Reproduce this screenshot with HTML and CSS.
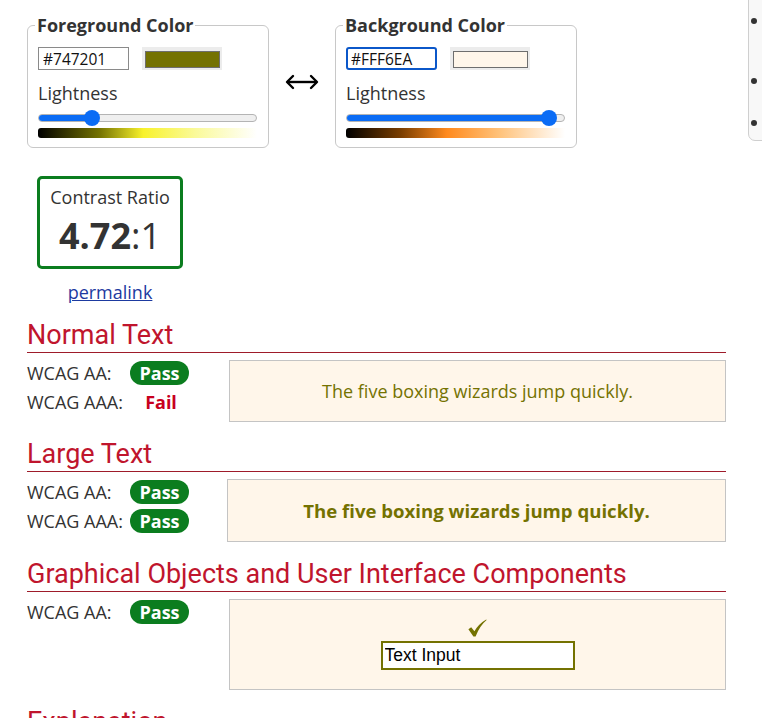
FILE: index.html
```html
<!DOCTYPE html>
<html lang="en">
<head>
<meta charset="utf-8">
<title>Contrast Checker</title>
<link rel="stylesheet" href="styles.css">
</head>
<body>
<div class="page">
  <main class="main">
    <div class="colors">
      <fieldset class="picker">
        <legend>Foreground Color</legend>
        <div class="picker-row">
          <input class="hex" type="text" value="#747201">
          <span class="swatch-btn"><span class="swatch swatch-fg"></span></span>
        </div>
        <div class="light-label">Lightness</div>
        <div class="slider">
          <div class="track"><div class="fill" style="width:24.5%"></div></div>
          <div class="thumb" style="left:24.5%"></div>
        </div>
        <div class="grad grad-fg"></div>
      </fieldset>
      <div class="swap">
        <svg width="36" height="16" viewBox="0 0 36 16" aria-hidden="true">
          <path d="M3 8H33" stroke="#000" stroke-width="2.4" fill="none"/>
          <path d="M9 2L3 8L9 14" stroke="#000" stroke-width="2.4" fill="none" stroke-linecap="round" stroke-linejoin="round"/>
          <path d="M27 2L33 8L27 14" stroke="#000" stroke-width="2.4" fill="none" stroke-linecap="round" stroke-linejoin="round"/>
        </svg>
      </div>
      <fieldset class="picker">
        <legend>Background Color</legend>
        <div class="picker-row">
          <input class="hex hex-focus" type="text" value="#FFF6EA">
          <span class="swatch-btn"><span class="swatch swatch-bg"></span></span>
        </div>
        <div class="light-label">Lightness</div>
        <div class="slider">
          <div class="track"><div class="fill" style="width:92.6%"></div></div>
          <div class="thumb" style="left:92.6%"></div>
        </div>
        <div class="grad grad-bg"></div>
      </fieldset>
    </div>

    <div class="ratio-wrap">
      <div class="ratio-box">
        <div class="ratio-label">Contrast Ratio</div>
        <div class="ratio-value"><b>4.72</b>:1</div>
      </div>
      <a class="permalink" href="#">permalink</a>
    </div>

    <section class="section">
      <h2>Normal Text</h2>
      <div class="result">
        <div class="checks">
          <div class="check-row"><span class="lbl">WCAG AA:</span><span class="status"><span class="pass">Pass</span></span></div>
          <div class="check-row"><span class="lbl">WCAG AAA:</span><span class="status"><span class="fail">Fail</span></span></div>
        </div>
        <div class="sample">The five boxing wizards jump quickly.</div>
      </div>
    </section>

    <section class="section">
      <h2>Large Text</h2>
      <div class="result result-large">
        <div class="checks">
          <div class="check-row"><span class="lbl">WCAG AA:</span><span class="status"><span class="pass">Pass</span></span></div>
          <div class="check-row"><span class="lbl">WCAG AAA:</span><span class="status"><span class="pass">Pass</span></span></div>
        </div>
        <div class="sample sample-large">The five boxing wizards jump quickly.</div>
      </div>
    </section>

    <section class="section">
      <h2>Graphical Objects and User Interface Components</h2>
      <div class="result">
        <div class="checks">
          <div class="check-row"><span class="lbl">WCAG AA:</span><span class="status"><span class="pass">Pass</span></span></div>
        </div>
        <div class="sample sample-ui">
          <svg class="tick" width="19" height="18" viewBox="0 0 19 18" aria-hidden="true">
            <path d="M0.4 10.2L3.2 8.2L6.4 12.2Q10.6 4.8 18.2 0.4L18.6 1.1Q12 6.6 7.6 17.4L5.4 17.4Z" fill="#747201"/>
          </svg>
          <input class="demo-input" type="text" value="Text Input">
        </div>
      </div>
    </section>

    <section class="section">
      <h2>Explanation</h2>
    </section>
  </main>

  <aside class="toc">
    <ul>
      <li class="toc-a"></li>
      <li class="toc-b"></li>
      <li class="toc-c"></li>
    </ul>
  </aside>
</div>
</body>
</html>
```
FILE: styles.css
```css
html, body {
  margin: 0;
  padding: 0;
  background: #fff;
  overflow: hidden;
}

body {
  font-family: "Open Sans", "Liberation Sans", sans-serif;
  font-size: 18px;
  color: #333;
}

.page {
  display: flex;
  align-items: flex-start;
  gap: 22px;
  padding: 14px 0 0 27px;
}

.main {
  width: 699px;
  flex: none;
}

/* color pickers */
.colors {
  display: flex;
  align-items: center;
}

.picker {
  margin: 0;
  width: 242px;
  box-sizing: border-box;
  padding: 11px 10px 9px 10px;
  border: 1px solid #c8c8c8;
  border-radius: 6px;
}

.picker legend {
  font-weight: 700;
  font-size: 18px;
  line-height: 22px;
  padding: 0 2px;
  margin-left: -3px;
  color: #333;
}

.picker-row {
  display: flex;
  align-items: center;
  gap: 13px;
}

.hex {
  width: 91px;
  height: 23px;
  box-sizing: border-box;
  margin: 0;
  padding: 0 4px;
  border: 1px solid #8a8a8a;
  border-radius: 0;
  font-family: "Open Sans", sans-serif;
  font-size: 15.5px;
  color: #111;
  background: #fff;
  outline: none;
}

.hex-focus {
  border: 2px solid #0b57c9;
  border-radius: 3px;
  padding: 0 3px;
}

.swatch-btn {
  display: flex;
  width: 80px;
  height: 23px;
  box-sizing: border-box;
  padding: 4px 2px 2px 3px;
  background: #ececec;
}

.swatch {
  flex: 1;
  border: 1px solid #6e6e6e;
}

.swatch-fg { background: #747201; }
.swatch-bg { background: #FFF6EA; }

.light-label {
  margin-top: 10px;
  line-height: 26px;
  color: #333;
}

.slider {
  position: relative;
  height: 16px;
  margin-top: 4px;
  width: 219px;
}

.track {
  position: absolute;
  left: 0;
  right: 0;
  top: 4px;
  height: 8px;
  box-sizing: border-box;
  border: 1px solid #b4b4b4;
  border-radius: 4px;
  background: #efefef;
  overflow: hidden;
}

.fill {
  height: 100%;
  background: #0b6cf5;
}

.thumb {
  position: absolute;
  top: 0;
  width: 16px;
  height: 16px;
  margin-left: -8px;
  border-radius: 50%;
  background: #0b6cf5;
}

.grad {
  margin-top: 2px;
  width: 219px;
  height: 10px;
  border-radius: 3px 0 0 3px;
}

.grad-fg {
  background: linear-gradient(to right, #000 0%, #747201 28%, #f8f22c 48%, #fafa9a 72%, #ffffff 100%);
}

.grad-bg {
  background: linear-gradient(to right, #000 0%, #7a3e00 25%, #ff8a1e 46%, #ffc27a 70%, #ffffff 100%);
}

.swap {
  width: 66px;
  display: flex;
  justify-content: center;
  align-items: center;
  padding-top: 2px;
}

/* ratio */
.ratio-wrap {
  margin: 28px 0 0 10px;
  width: 146px;
  display: flex;
  flex-direction: column;
  align-items: center;
}

.ratio-box {
  width: 146px;
  height: 93px;
  box-sizing: border-box;
  border: 3px solid #0b7d1f;
  border-radius: 5px;
  padding-top: 7px;
  text-align: center;
}

.ratio-label {
  line-height: 22px;
  color: #333;
}

.ratio-value {
  margin-top: 8px;
  font-size: 36px;
  line-height: 40px;
  color: #333;
}

.ratio-value b {
  font-weight: 700;
}

.permalink {
  margin-top: 12px;
  line-height: 22px;
  color: #1d3aa0;
  text-decoration: underline;
}

/* sections */
.section h2 {
  margin: 16px 0 7px 0;
  font-family: Roboto, "Liberation Sans", sans-serif;
  font-weight: 400;
  font-size: 27px;
  line-height: 33px;
  color: #c0152d;
  border-bottom: 1px solid #9e1b2a;
}

.result {
  display: grid;
  grid-template-columns: 162px 1fr;
  column-gap: 40px;
  align-items: start;
}

.result-large {
  column-gap: 38px;
}

.checks {
  margin-top: -1px;
}

.check-row {
  display: flex;
  align-items: center;
  height: 28.5px;
}

.lbl {
  width: 103px;
  color: #333;
}

.status {
  width: 59px;
  display: flex;
  justify-content: center;
}

.pass {
  display: inline-block;
  width: 59px;
  height: 24px;
  line-height: 24px;
  border-radius: 12px;
  background: #0b7d1f;
  color: #fff;
  font-weight: 700;
  text-align: center;
}

.fail {
  color: #c8001e;
  font-weight: 700;
  padding-left: 3px;
}

.sample {
  background: #FFF6EA;
  border: 1px solid #c4c4c4;
  padding: 18px 10px;
  line-height: 24px;
  text-align: center;
  color: #747201;
}

.sample-large {
  font-weight: 700;
  font-size: 18.6px;
  line-height: 25px;
}

.sample-ui {
  padding: 19px 10px 19px;
  display: flex;
  flex-direction: column;
  align-items: center;
}

.tick {
  display: block;
}

.demo-input {
  margin-top: 4px;
  width: 194px;
  height: 29px;
  box-sizing: border-box;
  border: 2px solid #747201;
  padding: 0 2px;
  font-family: "Liberation Sans", Arial, sans-serif;
  font-size: 17.5px;
  color: #000;
  background: #fff;
  outline: none;
}

/* side toc */
.toc {
  flex: none;
  width: 220px;
  margin-top: -54px;
  background: #f8f8f8;
  border: 1px solid #cfcfcf;
  border-radius: 0 0 0 7px;
}

.toc ul {
  margin: 0;
  padding: 0 0 7px 21px;
  color: #333;
  font-size: 18px;
  line-height: 22px;
}

.toc-a { height: 108px; padding-top: 48px; box-sizing: border-box; }
.toc-b { height: 42px; }
.toc-c { height: 22px; }
```
